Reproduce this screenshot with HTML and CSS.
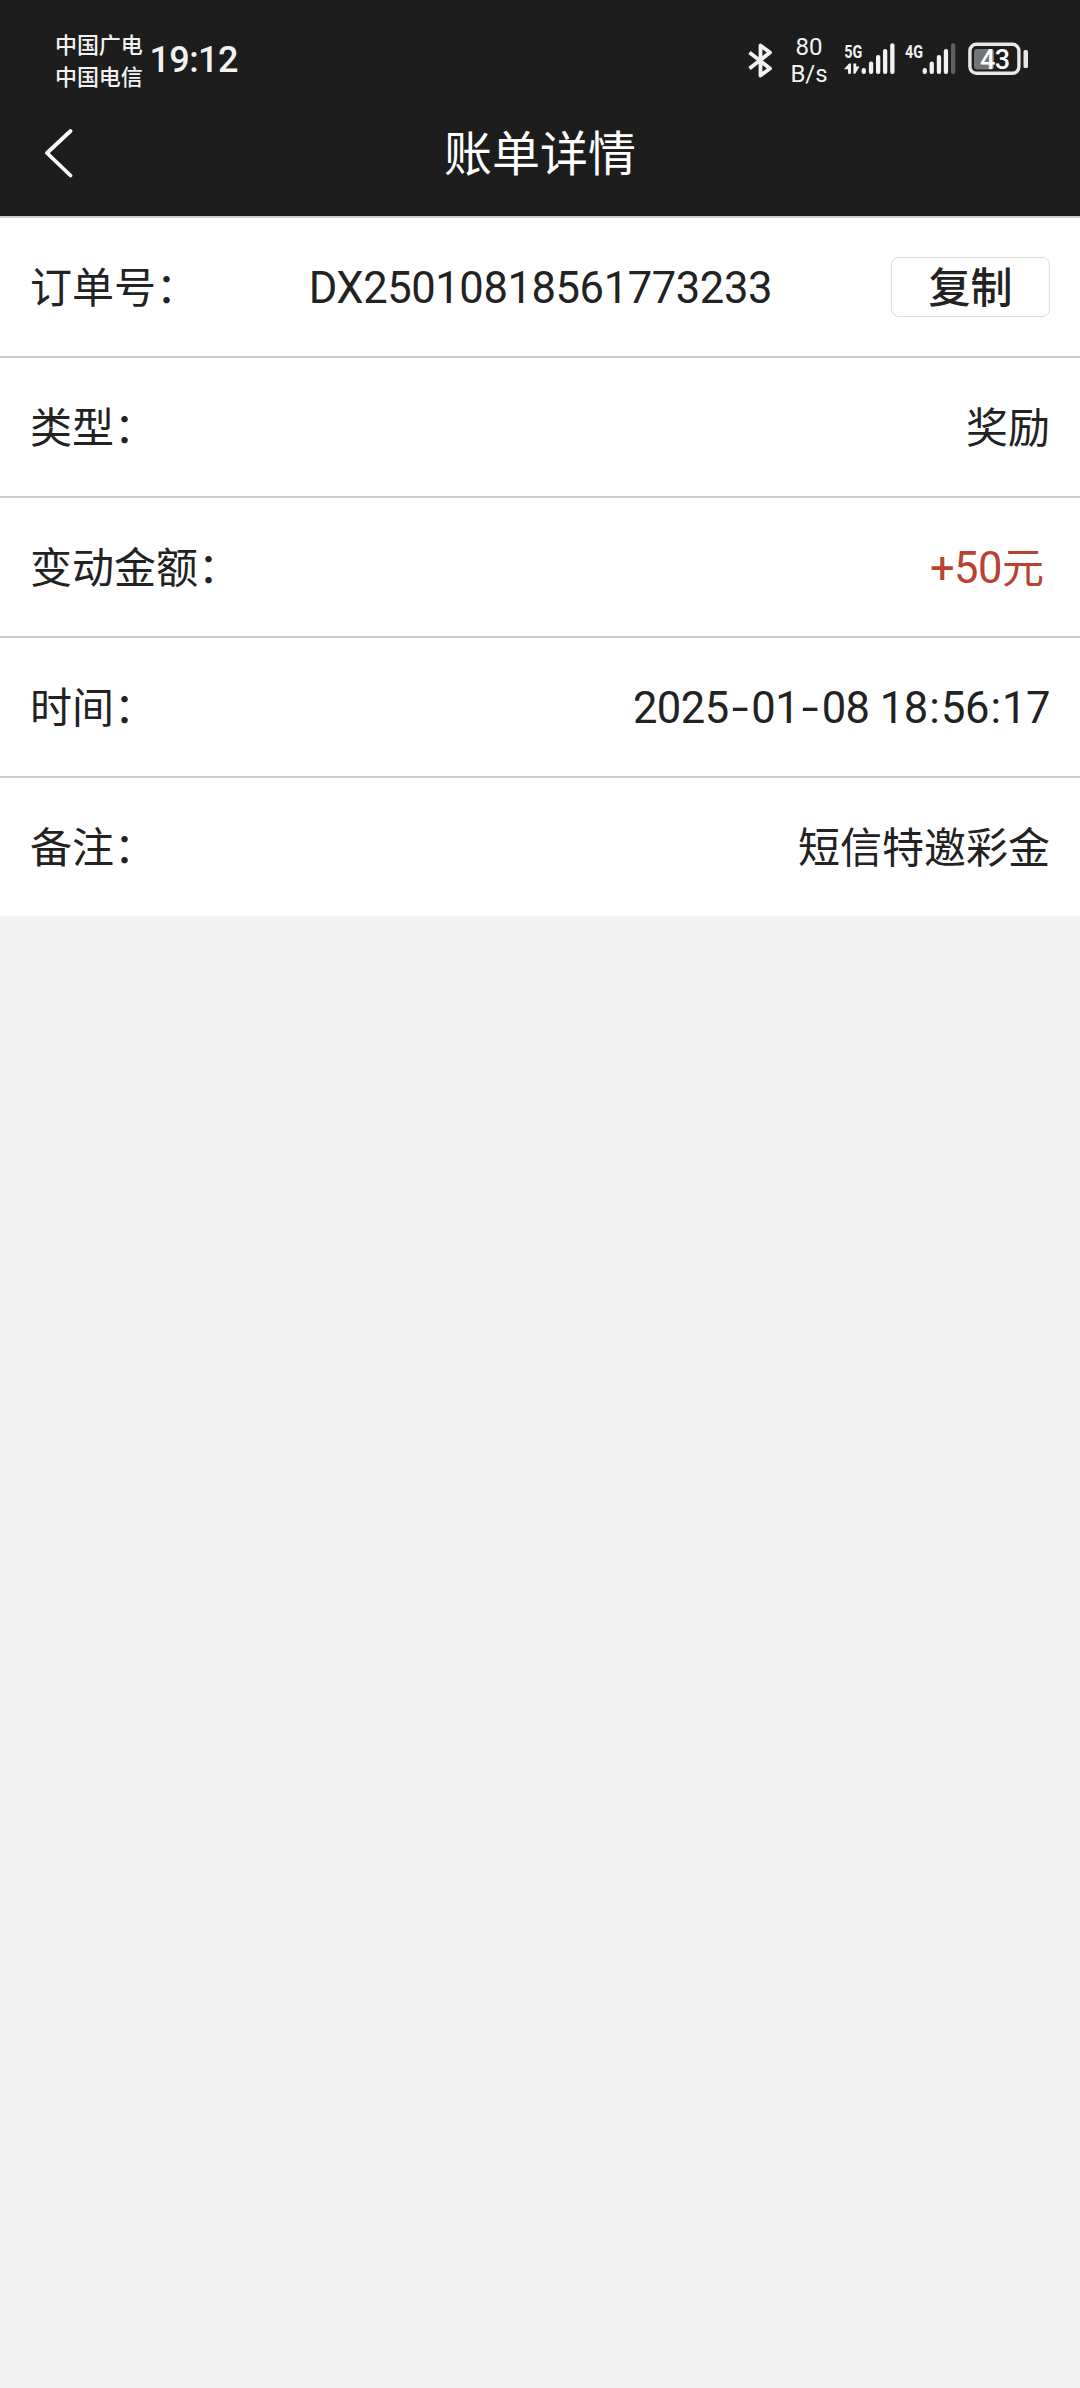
FILE: index.html
```html
<!DOCTYPE html>
<html lang="zh-CN">
<head>
<meta charset="utf-8">
<title>账单详情</title>
<link rel="stylesheet" href="styles.css">
</head>
<body>
<header class="top">
  <div class="status">
    <div class="carriers"><span>中国广电</span><span>中国电信</span></div>
    <div class="clock">19:12</div>
    <svg class="bluetooth" width="28" height="40" viewBox="0 0 28 40" fill="none" stroke="#f2f2f2" stroke-width="3.8" stroke-linejoin="round" stroke-linecap="butt"><path d="M3.5 12.5 L24 28.5 L14.5 35.5 V5.5 L24 12.5 L3.5 28.5"/></svg>
    <div class="speed"><span>80</span><span>B/s</span></div>
    <svg class="signals" width="114" height="40" viewBox="0 0 114 40">
      <g fill="#f2f2f2">
        <text class="net" x="2.2" y="19.5" textLength="18" lengthAdjust="spacingAndGlyphs">5G</text>
        <path d="M2 31.3 L7 25.5 H9 V35.7 H6 V31.3 Z M11.4 25.5 H14.2 V28.6 H17.6 L13.2 35.7 H11.4 Z"/>
        <rect x="19.6" y="30" width="4.3" height="6" rx="2"/>
        <rect x="26.9" y="23.6" width="4.3" height="12.4" rx="2"/>
        <rect x="34" y="17" width="4.3" height="19" rx="2"/>
        <rect x="41" y="11" width="4.3" height="25" rx="2"/>
        <rect x="48.2" y="5.3" width="4.3" height="30.7" rx="2"/>
        <text class="net" x="63" y="19.5" textLength="18" lengthAdjust="spacingAndGlyphs">4G</text>
        <rect x="80.6" y="30" width="4.3" height="6" rx="2"/>
        <rect x="87.6" y="23.6" width="4.3" height="12.4" rx="2"/>
        <rect x="94.8" y="17" width="4.3" height="19" rx="2"/>
        <rect x="101.8" y="11" width="4.3" height="25" rx="2"/>
      </g>
      <rect x="109" y="5.3" width="4.3" height="30.7" rx="2" fill="#606060"/>
    </svg>
    <svg class="battery" width="62" height="34" viewBox="0 0 62 34">
      <rect x="1.9" y="2.3" width="49" height="29" rx="6.5" fill="none" stroke="#e8e8e8" stroke-width="3.4"/>
      <rect x="6" y="7" width="20" height="20.5" rx="3" fill="#757575"/>
      <rect x="55.5" y="8" width="4.5" height="18" rx="1.5" fill="#e8e8e8"/>
      <text class="level" x="12" y="26.5" fill="#fff" textLength="30" lengthAdjust="spacing">43</text>
    </svg>
  </div>
  <nav class="nav">
    <svg class="back" width="32" height="52" viewBox="0 0 32 52" fill="none" stroke="#fff" stroke-width="3.8" stroke-linecap="round" stroke-linejoin="round"><path d="M26.5 5 L3 27 L26.5 49.5"/></svg>
    <h1>账单详情</h1>
  </nav>
</header>
<main class="details">
  <div class="row"><span class="label">订单号：</span><span class="num order">DX25010818561773233</span><button class="copy">复制</button></div>
  <div class="row"><span class="label">类型：</span><span class="value">奖励</span></div>
  <div class="row"><span class="label">变动金额：</span><span class="num amount">+50<span class="unit">元</span></span></div>
  <div class="row"><span class="label">时间：</span><span class="num date">2025<span class="dash">-</span>01<span class="dash">-</span>08 18<span class="colon">:</span>56<span class="colon">:</span>17</span></div>
  <div class="row"><span class="label">备注：</span><span class="value">短信特邀彩金</span></div>
</main>
</body>
</html>
```
FILE: styles.css
```css
* { box-sizing: border-box; }
body {
  margin: 0;
  min-height: 2388px;
  background: #f3f3f3;
  color: #222;
  font-family: "Noto Sans CJK SC", sans-serif;
  font-size: 42px;
}
.top { height: 216px; background: #1d1d1d; color: #fff; }
.status { height: 96px; padding: 27px 50px 0 55px; display: flex; align-items: flex-start; color: #f2f2f2; }
.carriers { width: 94.5px; display: flex; flex-direction: column; font-size: 22px; line-height: 32px; font-weight: 500; letter-spacing: -0.1px; }
.carriers span { height: 32px; }
.clock { margin-top: 12px; font: 500 36px/42px Roboto, sans-serif; letter-spacing: -0.6px; white-space: nowrap; }
.bluetooth { margin: 13px 0 0 auto; }
.speed { width: 50px; margin: 7px 8px 0 10px; display: flex; flex-direction: column; align-items: center; font: 400 24px/27px Roboto, sans-serif; }
.signals { margin-top: 11px; }
.battery { margin: 15px 0 0 12px; }
.net { font: 700 19px Roboto, sans-serif; }
.level { font: 500 27px Roboto, sans-serif; }
.nav { height: 120px; padding: 0 44px; display: grid; grid-template-columns: 32px 1fr 32px; align-items: center; }
.back { margin-bottom: 8px; }
h1 { margin: 0 0 12px; text-align: center; font-size: 48px; line-height: 70px; font-weight: 400; }
.details { background: #fff; }
.row { height: 140px; padding: 0 30px; border-top: 2px solid #ccc; display: flex; align-items: center; justify-content: space-between; line-height: 60px; white-space: nowrap; }
.label, .value { padding-bottom: 4px; }
.num { padding-top: 4px; font-family: Roboto, "Noto Sans CJK SC", sans-serif; font-size: 43.5px; letter-spacing: -0.5px; }
.order { margin: 0 119px 0 auto; letter-spacing: -0.4px; }
.amount { margin-right: 6px; color: #b94330; }
.unit { font-size: 42px; letter-spacing: 0; }
.dash { display: inline-block; width: 22.5px; text-align: center; letter-spacing: 0; transform: scaleX(1.4); }
.colon { padding: 0 1.6px; }
.copy { width: 159px; height: 60px; padding: 0 0 4px; border: 1px solid #ddd; border-radius: 8px; background: #fff; color: #222; font: 500 42px/54px "Noto Sans CJK SC", sans-serif; }
```
